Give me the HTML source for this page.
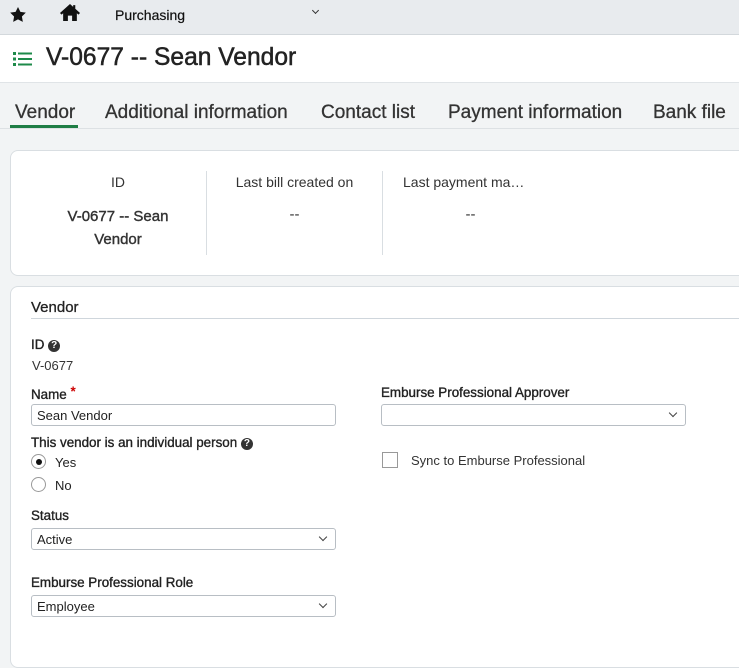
<!DOCTYPE html>
<html><head><style>
body{margin:0;width:739px;height:640px;overflow:hidden;background:#f2f4f5;font-family:"Liberation Sans",sans-serif;color:#222;position:relative}
.a{position:absolute}
.top{left:0;top:0;width:739px;height:34px;background:#e8ebee;border-bottom:1px solid #d3d8dc}
.hdr{left:0;top:35px;width:739px;height:47px;background:#fff;border-bottom:1px solid #e0e4e7}
.tab{top:102px;font-size:19px;color:#333;-webkit-text-stroke:0.3px #333}
.card{background:#fff;border:1px solid #d9dee2;border-radius:8px}
.lbl{font-size:13px;color:#222}
.b{-webkit-text-stroke:0.35px #222;font-size:13.4px}
.inp{height:22px;border:1px solid #b8bec4;border-radius:3px;background:#fff;font-size:13px;line-height:22px;padding-left:5px;box-sizing:border-box}
.chev{position:absolute;right:9px;top:5px;width:5px;height:5px;border-right:1px solid #444;border-bottom:1px solid #444;transform:rotate(45deg)}
.q{display:inline-block;width:12px;height:12px;border-radius:50%;background:#333;color:#fff;font-size:10px;line-height:12px;text-align:center;font-weight:bold;vertical-align:1px;-webkit-text-stroke:0}
.rad{width:15px;height:15px;border:1px solid #999;border-radius:50%;box-sizing:border-box;background:#fff}
</style></head><body>
<div class="a top"></div>
<svg class="a" style="left:10px;top:7px" width="16" height="15" viewBox="0 0 24 23"><path d="M12 0l3.7 7.5 8.3 1.2-6 5.8 1.4 8.3L12 18.9 4.6 22.8 6 14.5 0 8.7l8.3-1.2z" fill="#111"/></svg>
<svg class="a" style="left:59px;top:3px" width="22" height="19" viewBox="0 0 20 18"><path d="M10 1L0.5 9.5 2 11 3.5 9.7V17H8V12H12V17H16.5V9.7L18 11 19.5 9.5 15 5.5V2H13V3.7Z" fill="#111"/></svg>
<div class="a" style="left:115px;top:7px;font-size:14px;color:#111;-webkit-text-stroke:0.2px #111">Purchasing</div>
<div class="a" style="left:313px;top:8px;width:4px;height:4px;border-right:1px solid #333;border-bottom:1px solid #333;transform:rotate(45deg)"></div>
<div class="a hdr"></div>
<svg class="a" style="left:13px;top:52px" width="19" height="14" viewBox="0 0 19 14"><g fill="#1e8a4a"><rect x="0" y="0" width="3" height="3"/><rect x="5" y="0.5" width="14" height="2"/><rect x="0" y="5.5" width="3" height="3"/><rect x="5" y="6" width="14" height="2"/><rect x="0" y="11" width="3" height="3"/><rect x="5" y="11.5" width="14" height="2"/></g></svg>
<div class="a" style="left:46px;top:44px;font-size:24.6px;color:#222;-webkit-text-stroke:0.5px #222">V-0677 -- Sean Vendor</div>
<div class="a" style="left:0;top:128px;width:739px;height:1px;background:#dde1e4"></div>
<div class="a tab" style="left:15px">Vendor</div>
<div class="a" style="left:10px;top:125px;width:68px;height:3px;background:#1e7d45"></div>
<div class="a tab" style="left:105px">Additional information</div>
<div class="a tab" style="left:321px">Contact list</div>
<div class="a tab" style="left:448px">Payment information</div>
<div class="a tab" style="left:653px">Bank file</div>
<div class="a card" style="left:10px;top:150px;width:740px;height:124px"></div>
<div class="a" style="left:206px;top:171px;width:1px;height:84px;background:#d9dee2"></div>
<div class="a" style="left:382px;top:171px;width:1px;height:84px;background:#d9dee2"></div>
<div class="a" style="left:30px;top:174px;width:176px;text-align:center;font-size:14px;color:#333">ID</div>
<div class="a" style="left:30px;top:205px;width:176px;text-align:center;font-size:15px;line-height:23px;color:#333;-webkit-text-stroke:0.4px #333">V-0677 -- Sean<br>Vendor</div>
<div class="a" style="left:207px;top:174px;width:175px;text-align:center;font-size:14px;color:#333">Last bill created on</div>
<div class="a" style="left:207px;top:206px;width:175px;text-align:center;font-size:15px;color:#333">--</div>
<div class="a" style="left:403px;top:174px;font-size:14px;color:#333">Last payment ma…</div>
<div class="a" style="left:383px;top:206px;width:175px;text-align:center;font-size:15px;color:#333">--</div>
<div class="a card" style="left:10px;top:286px;width:740px;height:380px"></div>
<div class="a" style="left:31px;top:299px;font-size:15px;color:#222;-webkit-text-stroke:0.3px #222">Vendor</div>
<div class="a" style="left:31px;top:318px;width:708px;height:1px;background:#cfd6dc"></div>
<div class="a lbl b" style="left:31px;top:337px">ID <span class="q">?</span></div>
<div class="a lbl" style="left:32px;top:358px;color:#333">V-0677</div>
<div class="a lbl b" style="left:31px;top:384px">Name <span style="color:#c00;font-weight:bold;vertical-align:3px;-webkit-text-stroke:0">*</span></div>
<div class="a inp" style="left:31px;top:404px;width:305px">Sean Vendor</div>
<div class="a lbl b" style="left:31px;top:435px">This vendor is an individual person <span class="q">?</span></div>
<div class="a rad" style="left:31px;top:454px"><div style="width:6px;height:6px;border-radius:50%;background:#111;margin:3.5px"></div></div>
<div class="a lbl" style="left:55px;top:455px">Yes</div>
<div class="a rad" style="left:31px;top:477px"></div>
<div class="a lbl" style="left:55px;top:478px">No</div>
<div class="a lbl b" style="left:31px;top:508px">Status</div>
<div class="a inp" style="left:31px;top:528px;width:305px">Active<div class="chev"></div></div>
<div class="a lbl b" style="left:31px;top:575px">Emburse Professional Role</div>
<div class="a inp" style="left:31px;top:595px;width:305px">Employee<div class="chev"></div></div>
<div class="a lbl b" style="left:381px;top:385px">Emburse Professional Approver</div>
<div class="a inp" style="left:381px;top:404px;width:305px"><div class="chev"></div></div>
<div class="a" style="left:382px;top:452px;width:16px;height:16px;border:1px solid #999;box-sizing:border-box;background:#fff"></div>
<div class="a lbl" style="left:411px;top:453px;color:#333">Sync to Emburse Professional</div>
</body></html>
